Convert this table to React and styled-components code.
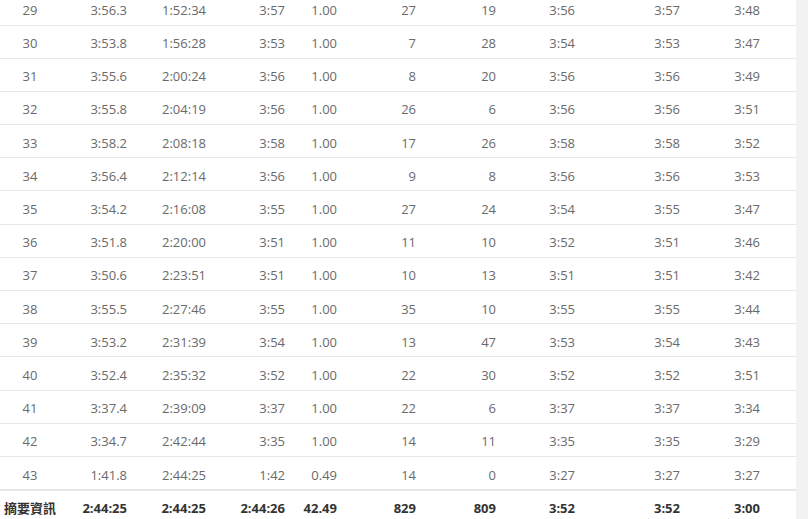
import React from "react";
import styled, { createGlobalStyle } from "styled-components";

const Global = createGlobalStyle`
  html, body { margin: 0; padding: 0; background: #f2f2f2; overflow: hidden; }
  body { font-family: "Open Sans", "Noto Sans CJK TC", sans-serif; }
`;

const Page = styled.div`
  width: 796px;
  height: 519px;
  background: #ffffff;
  overflow: hidden;
`;

const Table = styled.div`
  margin-top: -7.7px;
  display: flex;
  flex-direction: column;
`;

const cols = "60px 75px 79px 79px 52px 79px 80px 79px 105px 80px 29px";

const Row = styled.div`
  display: grid;
  grid-template-columns: ${cols};
  height: 33.2px;
  box-sizing: border-box;
  padding-top: 3px;
  border-bottom: 1px solid #e8e8e8;
  align-items: center;
  font-size: 13px;
  color: ${(p) => (p.$summary ? "#333333" : "#6a6a6a")};
  font-weight: ${(p) => (p.$summary ? 700 : 400)};
  ${(p) => (p.$summary ? "border-top: 1px solid #e8e8e8; border-bottom: none; height: 33px; padding-top: 1px;" : "")}
`;

const Cell = styled.div`
  text-align: ${(p) => (p.$center ? "center" : "right")};
  padding-right: ${(p) => (p.$center ? "0" : "8px")};
  white-space: nowrap;
`;

const rows = [
  ["29", "3:56.3", "1:52:34", "3:57", "1.00", "27", "19", "3:56", "3:57", "3:48"],
  ["30", "3:53.8", "1:56:28", "3:53", "1.00", "7", "28", "3:54", "3:53", "3:47"],
  ["31", "3:55.6", "2:00:24", "3:56", "1.00", "8", "20", "3:56", "3:56", "3:49"],
  ["32", "3:55.8", "2:04:19", "3:56", "1.00", "26", "6", "3:56", "3:56", "3:51"],
  ["33", "3:58.2", "2:08:18", "3:58", "1.00", "17", "26", "3:58", "3:58", "3:52"],
  ["34", "3:56.4", "2:12:14", "3:56", "1.00", "9", "8", "3:56", "3:56", "3:53"],
  ["35", "3:54.2", "2:16:08", "3:55", "1.00", "27", "24", "3:54", "3:55", "3:47"],
  ["36", "3:51.8", "2:20:00", "3:51", "1.00", "11", "10", "3:52", "3:51", "3:46"],
  ["37", "3:50.6", "2:23:51", "3:51", "1.00", "10", "13", "3:51", "3:51", "3:42"],
  ["38", "3:55.5", "2:27:46", "3:55", "1.00", "35", "10", "3:55", "3:55", "3:44"],
  ["39", "3:53.2", "2:31:39", "3:54", "1.00", "13", "47", "3:53", "3:54", "3:43"],
  ["40", "3:52.4", "2:35:32", "3:52", "1.00", "22", "30", "3:52", "3:52", "3:51"],
  ["41", "3:37.4", "2:39:09", "3:37", "1.00", "22", "6", "3:37", "3:37", "3:34"],
  ["42", "3:34.7", "2:42:44", "3:35", "1.00", "14", "11", "3:35", "3:35", "3:29"],
  ["43", "1:41.8", "2:44:25", "1:42", "0.49", "14", "0", "3:27", "3:27", "3:27"],
];

const summary = ["摘要資訊", "2:44:25", "2:44:25", "2:44:26", "42.49", "829", "809", "3:52", "3:52", "3:00"];

function DataRow({ values, summary: isSummary }) {
  return (
    <Row $summary={isSummary}>
      {values.map((v, i) => (
        <Cell key={i} $center={i === 0}>
          {v}
        </Cell>
      ))}
      <Cell />
    </Row>
  );
}

export default function App() {
  return (
    <>
      <Global />
      <Page>
        <Table>
          {rows.map((r) => (
            <DataRow key={r[0]} values={r} />
          ))}
          <DataRow values={summary} summary />
        </Table>
      </Page>
    </>
  );
}
